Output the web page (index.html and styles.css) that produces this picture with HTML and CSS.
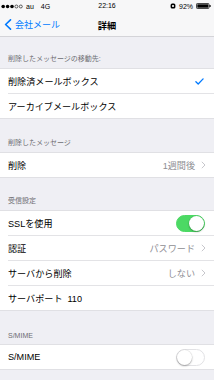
FILE: index.html
```html
<!DOCTYPE html>
<html lang="ja">
<head>
<meta charset="utf-8">
<link rel="stylesheet" href="styles.css">
</head>
<body>
<div class="screen">
  <div class="topbar">
    <div class="status">
      <div class="st-left">
        <svg class="dots" width="22" height="5" viewBox="0 0 22 5">
          <circle cx="2.2" cy="2.5" r="1.8" fill="#000"/>
          <circle cx="6.6" cy="2.5" r="1.8" fill="#000"/>
          <circle cx="11" cy="2.5" r="1.8" fill="#000"/>
          <circle cx="15.4" cy="2.5" r="1.5" fill="none" stroke="#000" stroke-width="0.6"/>
          <circle cx="19.8" cy="2.5" r="1.5" fill="none" stroke="#000" stroke-width="0.6"/>
        </svg>
        <span>au</span><span class="net">4G</span>
      </div>
      <div class="st-time">22:16</div>
      <div class="st-right">
        <svg width="6" height="6" viewBox="0 0 6 6"><rect x="0.6" y="0.6" width="4.8" height="4.8" rx="1.5" fill="#000"/><rect x="2.2" y="2" width="1.6" height="2" fill="#fff"/></svg>
        <span>92%</span>
        <svg width="15" height="6" viewBox="0 0 15 6"><rect x="0.5" y="0.5" width="12.5" height="5" rx="0.8" fill="none" stroke="#000" stroke-width="0.7"/><rect x="1.3" y="1.3" width="11" height="3.4" fill="#000"/><rect x="13.4" y="2" width="1.2" height="2" fill="#000"/></svg>
      </div>
    </div>
    <div class="nav">
      <div class="back">
        <svg width="8" height="11" viewBox="0 0 8 11"><path d="M6.5 0.8 L1.6 5.5 L6.5 10.2" fill="none" stroke="#007aff" stroke-width="1.6" stroke-linecap="round" stroke-linejoin="round"/></svg>
        <span>会社メール</span>
      </div>
      <div class="title">詳細</div>
    </div>
  </div>

  <div class="hdr h1">削除したメッセージの移動先:</div>
  <div class="group">
    <div class="row"><span class="label">削除済メールボックス</span>
      <svg class="check" width="9" height="7" viewBox="0 0 9 7"><path d="M0.9 3.8 L3.2 6 L8.1 0.9" fill="none" stroke="#007aff" stroke-width="1.3" stroke-linecap="round" stroke-linejoin="round"/></svg>
    </div>
    <div class="row"><span class="label">アーカイブメールボックス</span></div>
  </div>

  <div class="hdr h2">削除したメッセージ</div>
  <div class="group">
    <div class="row"><span class="label">削除</span>
      <span class="value">1週間後<svg class="chev" width="5" height="8" viewBox="0 0 5 8"><path d="M0.8 0.8 L4 4 L0.8 7.2" fill="none" stroke="#c7c7cc" stroke-width="1"/></svg></span>
    </div>
  </div>

  <div class="hdr h3">受信設定</div>
  <div class="group">
    <div class="row"><span class="label">SSLを使用</span><span class="toggle on"><span class="knob"></span></span></div>
    <div class="row"><span class="label">認証</span>
      <span class="value">パスワード<svg class="chev" width="5" height="8" viewBox="0 0 5 8"><path d="M0.8 0.8 L4 4 L0.8 7.2" fill="none" stroke="#c7c7cc" stroke-width="1"/></svg></span>
    </div>
    <div class="row"><span class="label">サーバから削除</span>
      <span class="value">しない<svg class="chev" width="5" height="8" viewBox="0 0 5 8"><path d="M0.8 0.8 L4 4 L0.8 7.2" fill="none" stroke="#c7c7cc" stroke-width="1"/></svg></span>
    </div>
    <div class="row"><span class="label">サーバポート<span class="port">110</span></span></div>
  </div>

  <div class="hdr h4">S/MIME</div>
  <div class="group">
    <div class="row"><span class="label">S/MIME</span><span class="toggle"><span class="knob"></span></span></div>
  </div>
</div>
</body>
</html>
```

FILE: styles.css
```css
* { box-sizing: border-box; }
html, body { margin: 0; padding: 0; }
body {
  width: 214px;
  height: 380px;
  overflow: hidden;
  background: #efeff4;
  font-family: "Liberation Sans", "Noto Sans CJK JP", sans-serif;
  color: #000;
}
.screen { width: 214px; }
.topbar {
  background: #f7f7f8;
  border-bottom: 1px solid #d4d4d8;
}
.status {
  height: 12px;
  display: flex;
  align-items: center;
  justify-content: space-between;
  padding: 0 3px 0 1px;
  font-size: 7px;
  position: relative;
}
.st-left { display: flex; align-items: center; gap: 3px; }
.st-left .net { margin-left: 4px; }
.st-time {
  position: absolute;
  left: 0; right: 0;
  text-align: center;
  top: 2px;
  font-size: 7px;
}
.st-right { display: flex; align-items: center; gap: 3px; }
.nav {
  height: 24px;
  display: flex;
  align-items: center;
  position: relative;
  padding-left: 4px;
}
.back {
  display: flex;
  align-items: center;
  gap: 3px;
  color: #007aff;
  font-size: 9px;
}
.title {
  position: absolute;
  left: 0; right: 0;
  text-align: center;
  font-size: 9.2px;
  font-weight: bold;
  top: 6px;
}
.hdr {
  font-size: 7px;
  color: #6d6d72;
  padding-left: 8px;
  display: flex;
  align-items: flex-end;
  padding-bottom: 5px;
}
.h1 { height: 31px; }
.h2 { height: 33px; }
.h3 { height: 32px; }
.h4 { height: 33px; }
.group {
  background: #fff;
  border-top: 1px solid #e0e0e4;
  border-bottom: 1px solid #e0e0e4;
  padding-left: 8px;
}
.row {
  height: 25px;
  display: flex;
  align-items: center;
  justify-content: space-between;
  padding-right: 8px;
  font-size: 9.1px;
  border-bottom: 1px solid #e3e3e6;
}
.row:last-child { border-bottom: none; height: 24px; }
.label { white-space: nowrap; }
.port { margin-left: 5px; }
.value {
  color: #8e8e93;
  display: flex;
  align-items: center;
  gap: 6px;
}
.check { margin-right: 2px; }
.toggle {
  width: 29px;
  height: 17px;
  border-radius: 9px;
  background: #fff;
  border: 1px solid #e2e2e5;
  position: relative;
  margin-right: 1px;
}
.toggle .knob {
  position: absolute;
  top: 0;
  left: 0;
  width: 15px;
  height: 15px;
  border-radius: 50%;
  background: #fff;
  box-shadow: 0 1px 2px rgba(0,0,0,0.3), 0 0 0 0.5px rgba(0,0,0,0.08);
}
.toggle.on {
  background: #4cd964;
  border-color: #4cd964;
}
.toggle.on .knob { left: 12px; }
```
